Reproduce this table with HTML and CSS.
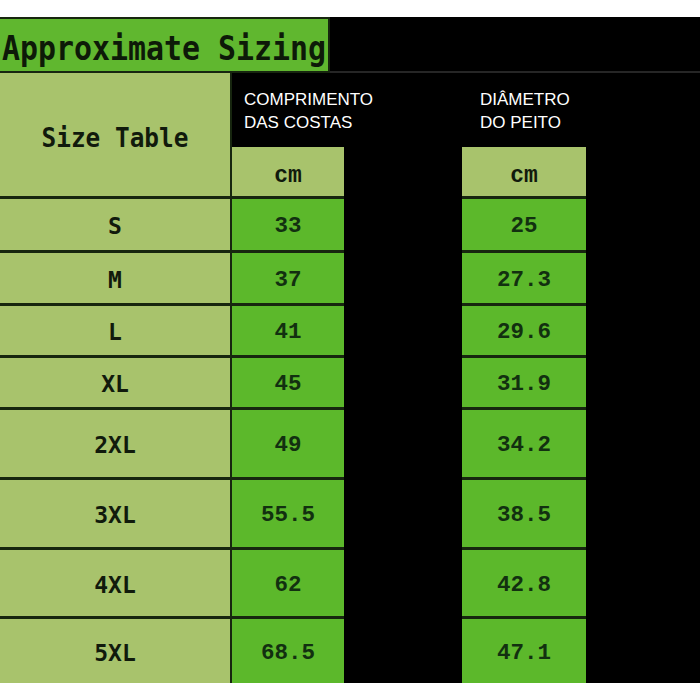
FILE: index.html
```html
<!DOCTYPE html>
<html>
<head>
<meta charset="utf-8">
<link rel="stylesheet" href="styles.css">
</head>
<body>
<div class="sheet">
  <div class="title-row">
    <div class="title"><span class="title-text">Approximate Sizing</span></div>
  </div>
  <div class="table">
    <div class="corner"><span class="corner-text">Size Table</span></div>
    <div class="head head1">COMPRIMENTO<br>DAS COSTAS</div>
    <div class="head head2">DIÂMETRO<br>DO PEITO</div>
    <div class="unit u1">cm</div>
    <div class="unit u2">cm</div>

    <div class="size">S</div><div class="val v1">33</div><div class="val v2">25</div>
    <div class="size">M</div><div class="val v1">37</div><div class="val v2">27.3</div>
    <div class="size">L</div><div class="val v1">41</div><div class="val v2">29.6</div>
    <div class="size">XL</div><div class="val v1">45</div><div class="val v2">31.9</div>
    <div class="size">2XL</div><div class="val v1">49</div><div class="val v2">34.2</div>
    <div class="size">3XL</div><div class="val v1">55.5</div><div class="val v2">38.5</div>
    <div class="size">4XL</div><div class="val v1">62</div><div class="val v2">42.8</div>
    <div class="size">5XL</div><div class="val v1">68.5</div><div class="val v2">47.1</div>
  </div>
</div>
</body>
</html>
```

FILE: styles.css
```css
* { box-sizing: border-box; }

html, body {
  margin: 0;
  padding: 0;
  background: #ffffff;
}

body {
  width: 700px;
  height: 700px;
  padding-top: 17px;
}

.sheet {
  background: #000000;
  width: 700px;
}

.title-row {
  height: 56px;
  display: flex;
  box-shadow: inset 0 -2px 0 #262626;
}

.title {
  width: 330px;
  height: 56px;
  background: #60b72f;
  border-top: 2px solid #17260f;
  border-bottom: 2px solid #17260f;
  border-right: 2px solid #17260f;
  display: flex;
  align-items: center;
  padding-left: 2px;
  padding-top: 5px;
}

.title-text {
  display: inline-block;
  font-family: "DejaVu Sans Mono", monospace;
  font-weight: bold;
  font-size: 29.9px;
  color: #0d1a08;
  transform: scaleY(1.15);
  white-space: nowrap;
}

.table {
  display: grid;
  grid-template-columns: 232px 112px 118px 124px 1fr;
  grid-template-rows: 74px 49px 54px 53px 52px 52px 70px 70px 69px 67px;
}

.corner {
  grid-row: 1 / 3;
  grid-column: 1;
  background: #a8c36c;
  border-right: 2px solid #17260f;
  display: flex;
  align-items: center;
  justify-content: center;
  padding-top: 6px;
}

.corner-text {
  display: inline-block;
  font-family: "DejaVu Sans Mono", monospace;
  font-weight: bold;
  font-size: 24.4px;
  color: #111a0c;
  transform: scaleY(1.12);
  white-space: nowrap;
}

.head {
  grid-row: 1;
  color: #ffffff;
  font-family: "Liberation Sans", Arial, sans-serif;
  font-size: 17px;
  line-height: 23px;
  padding-top: 15px;
}

.head1 {
  grid-column: 2 / 4;
  padding-left: 12px;
}

.head2 {
  grid-column: 4 / 6;
  padding-left: 18px;
}

.unit {
  grid-row: 2;
  background: #a8c36c;
  display: flex;
  align-items: center;
  justify-content: center;
  padding-top: 8px;
  font-family: "Liberation Mono", monospace;
  font-weight: bold;
  font-size: 23px;
  color: #111a0c;
}

.u1 { grid-column: 2; }
.u2 { grid-column: 4; }

.size {
  grid-column: 1;
  background: #a8c36c;
  border-top: 3px solid #17260f;
  border-right: 2px solid #17260f;
  display: flex;
  align-items: center;
  justify-content: center;
  padding-top: 3px;
  font-family: "DejaVu Sans Mono", monospace;
  font-weight: bold;
  font-size: 23px;
  color: #111a0c;
}

.val {
  background: #5cb82b;
  border-top: 3px solid #17260f;
  display: flex;
  align-items: center;
  justify-content: center;
  padding-top: 3px;
  font-family: "Liberation Mono", monospace;
  font-weight: bold;
  font-size: 22.5px;
  color: #123010;
}

.v1 { grid-column: 2; }
.v2 { grid-column: 4; }
```
